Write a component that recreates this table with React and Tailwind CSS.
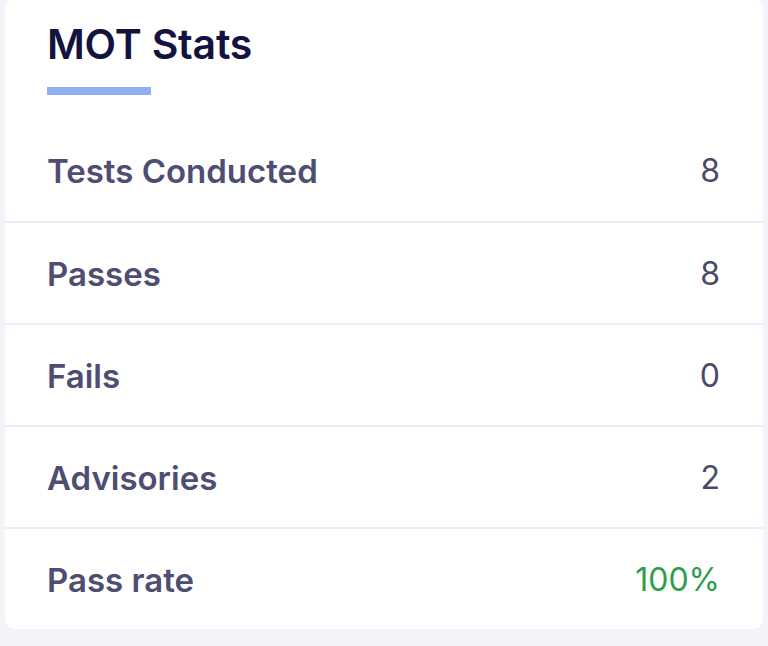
export default function App() {
  const rows = [
    { label: "Tests Conducted", value: "8" },
    { label: "Passes", value: "8" },
    { label: "Fails", value: "0" },
    { label: "Advisories", value: "2" },
    { label: "Pass rate", value: "100%", green: true },
  ];
  return (
    <div className="w-[768px] h-[646px] bg-[#f3f4f9] px-[5px] overflow-hidden" style={{ fontFamily: "Inter, 'Noto Sans', sans-serif" }}>
      <div className="bg-white rounded-[10px] -mt-[2px] pt-[2px]">
        <div className="pl-[42px] pr-[44px] pt-[20px] pb-[24px]">
          <h2 className="text-[41px] leading-[48px] font-semibold text-[#14123f] tracking-[-0.2px]">MOT Stats</h2>
          <div className="mt-[19px] w-[104px] h-[8px] bg-[#8fb0f5]"></div>
        </div>
        {rows.map((r, i) => (
          <div
            key={r.label}
            className={`flex items-center justify-between pl-[42px] pr-[43px] pt-[1px] ${i === 0 ? "h-[102px]" : "h-[102px] border-t-2 border-[#eceef5]"}`}
          >
            <span className="text-[33px] leading-[40px] font-semibold text-[#4e4d72]">{r.label}</span>
            <span className={`text-[32px] leading-[40px] font-normal ${r.green ? "text-[#2f9e4b]" : "text-[#4a4a68]"}`}>{r.value}</span>
          </div>
        ))}
      </div>
    </div>
  );
}
